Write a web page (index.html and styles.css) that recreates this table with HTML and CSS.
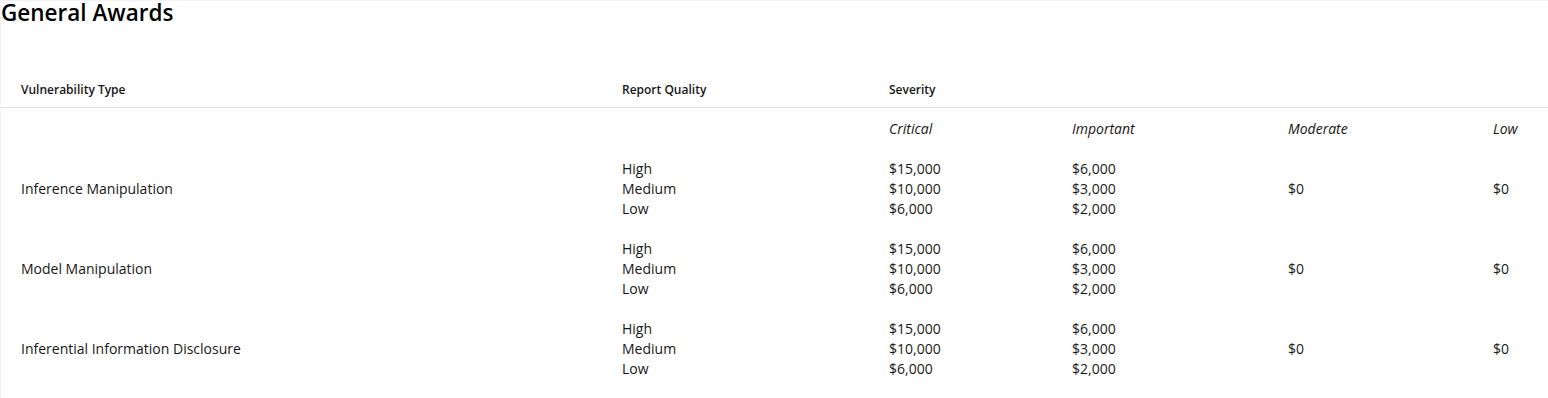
FILE: index.html
```html
<!DOCTYPE html>
<html lang="en">
<head>
    <meta charset="UTF-8">
    <meta name="viewport" content="width=device-width, initial-scale=1.0">
    <title>General Awards</title>
    <link rel="stylesheet" href="styles.css">
</head>
<body>
    <h2 class="section-title">General Awards</h2>
    <table class="awards-table">
        <colgroup>
            <col class="col-type">
            <col class="col-quality">
            <col class="col-critical">
            <col class="col-important">
            <col class="col-moderate">
            <col class="col-low">
        </colgroup>
        <thead>
            <tr class="head-row">
                <th>Vulnerability Type</th>
                <th>Report Quality</th>
                <th colspan="4">Severity</th>
            </tr>
        </thead>
        <tbody>
            <tr class="severity-row">
                <td></td>
                <td></td>
                <td><em>Critical</em></td>
                <td><em>Important</em></td>
                <td><em>Moderate</em></td>
                <td><em>Low</em></td>
            </tr>
            <tr>
                <td>Inference Manipulation</td>
                <td>High<br>Medium<br>Low</td>
                <td>$15,000<br>$10,000<br>$6,000</td>
                <td>$6,000<br>$3,000<br>$2,000</td>
                <td>$0</td>
                <td>$0</td>
            </tr>
            <tr>
                <td>Model Manipulation</td>
                <td>High<br>Medium<br>Low</td>
                <td>$15,000<br>$10,000<br>$6,000</td>
                <td>$6,000<br>$3,000<br>$2,000</td>
                <td>$0</td>
                <td>$0</td>
            </tr>
            <tr>
                <td>Inferential Information Disclosure</td>
                <td>High<br>Medium<br>Low</td>
                <td>$15,000<br>$10,000<br>$6,000</td>
                <td>$6,000<br>$3,000<br>$2,000</td>
                <td>$0</td>
                <td>$0</td>
            </tr>
        </tbody>
    </table>
</body>
</html>
```

FILE: styles.css
```css
body {
    margin: 0;
    font-family: "Open Sans", "Noto Sans", sans-serif;
    color: #171717;
    background: #ffffff;
    border-top: 1px solid #f2f2f2;
    border-left: 1px solid #f2f2f2;
    height: 100vh;
    box-sizing: border-box;
}

.section-title {
    margin: 0;
    font-size: 22.5px;
    font-weight: 600;
    line-height: 23px;
    color: #000;
}

.awards-table {
    width: 100%;
    margin-top: 56px;
    border-collapse: collapse;
    table-layout: fixed;
    font-size: 14px;
    line-height: 20px;
}

.col-type { width: 601px; }
.col-quality { width: 267px; }
.col-critical { width: 183px; }
.col-important { width: 216px; }
.col-moderate { width: 205px; }
.col-low { width: auto; }

.awards-table th,
.awards-table td {
    padding: 10px 0 10px 20px;
    text-align: left;
    vertical-align: middle;
}

.head-row th {
    padding-top: 0;
    padding-bottom: 7px;
    font-size: 12px;
    font-weight: 600;
    border-bottom: 1px solid #e1e1e1;
}

.severity-row td {
    padding-top: 11px;
}

.severity-row em {
    font-style: italic;
}
```
